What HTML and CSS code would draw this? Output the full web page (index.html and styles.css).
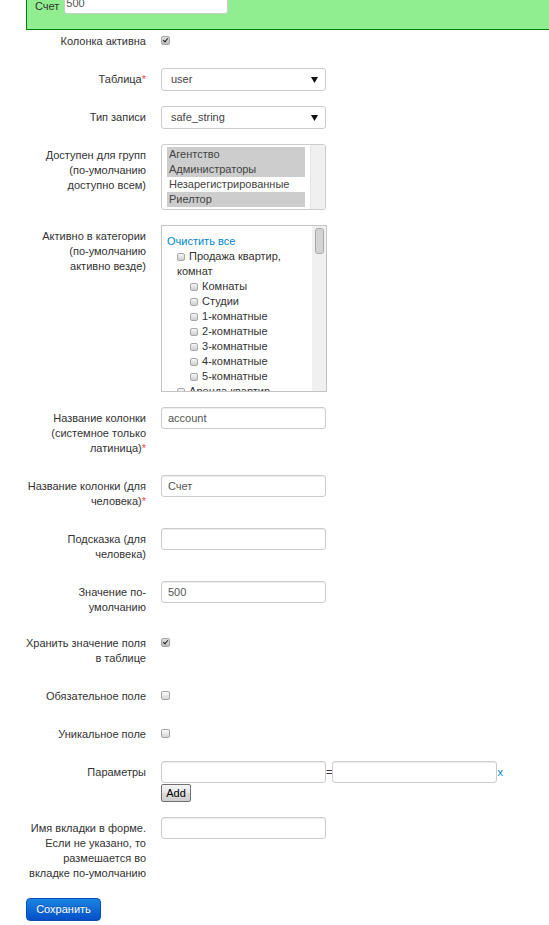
FILE: index.html
```html
<!DOCTYPE html>
<html lang="ru">
<head>
<meta charset="UTF-8">
<meta name="viewport" content="width=device-width, initial-scale=1.0">
<title>Колонка</title>
<link rel="stylesheet" href="styles.css">
</head>
<body>
<div class="preview">
    <label class="preview-label">Счет</label>
    <input type="text" class="preview-input" value="500">
</div>

<form class="form">
    <div class="row">
        <label class="label">Колонка активна</label>
        <div class="controls"><input type="checkbox" class="check" checked></div>
    </div>

    <div class="row">
        <label class="label">Таблица<span class="req">*</span></label>
        <div class="controls">
            <div class="select">
                <select><option>user</option></select>
                <svg width="7" height="6" viewBox="0 0 7 6"><path d="M0 0H7L3.5 6Z" fill="#111"/></svg>
            </div>
        </div>
    </div>

    <div class="row">
        <label class="label">Тип записи</label>
        <div class="controls">
            <div class="select">
                <select><option>safe_string</option></select>
                <svg width="7" height="6" viewBox="0 0 7 6"><path d="M0 0H7L3.5 6Z" fill="#111"/></svg>
            </div>
        </div>
    </div>

    <div class="row">
        <label class="label">Доступен для групп<br>(по-умолчанию<br>доступно всем)</label>
        <div class="controls">
            <div class="listbox">
                <div class="listbox-items">
                    <div class="option selected">Агентство</div>
                    <div class="option selected">Администраторы</div>
                    <div class="option">Незарегистрированные</div>
                    <div class="option selected">Риелтор</div>
                </div>
                <div class="listbox-bar"></div>
            </div>
        </div>
    </div>

    <div class="row">
        <label class="label">Активно в категории<br>(по-умолчанию<br>активно везде)</label>
        <div class="controls">
            <div class="tree-box">
                <div class="tree">
                    <a href="#" class="clear">Очистить все</a>
                    <ul>
                        <li><input type="checkbox" class="mini"> Продажа квартир, комнат
                            <ul>
                                <li><input type="checkbox" class="mini"> Комнаты</li>
                                <li><input type="checkbox" class="mini"> Студии</li>
                                <li><input type="checkbox" class="mini"> 1-комнатные</li>
                                <li><input type="checkbox" class="mini"> 2-комнатные</li>
                                <li><input type="checkbox" class="mini"> 3-комнатные</li>
                                <li><input type="checkbox" class="mini"> 4-комнатные</li>
                                <li><input type="checkbox" class="mini"> 5-комнатные</li>
                            </ul>
                        </li>
                        <li><input type="checkbox" class="mini"> Аренда квартир</li>
                    </ul>
                </div>
                <div class="tree-bar"><div class="tree-thumb"></div></div>
            </div>
        </div>
    </div>

    <div class="row">
        <label class="label">Название колонки<br>(системное только<br>латиница)<span class="req">*</span></label>
        <div class="controls"><input type="text" class="text" value="account"></div>
    </div>

    <div class="row">
        <label class="label">Название колонки (для<br>человека)<span class="req">*</span></label>
        <div class="controls"><input type="text" class="text" value="Счет"></div>
    </div>

    <div class="row">
        <label class="label">Подсказка (для<br>человека)</label>
        <div class="controls"><input type="text" class="text"></div>
    </div>

    <div class="row">
        <label class="label short">Значение по-<br>умолчанию</label>
        <div class="controls"><input type="text" class="text" value="500"></div>
    </div>

    <div class="row">
        <label class="label">Хранить значение поля<br>в таблице</label>
        <div class="controls"><input type="checkbox" class="check" checked></div>
    </div>

    <div class="row">
        <label class="label">Обязательное поле</label>
        <div class="controls"><input type="checkbox" class="check"></div>
    </div>

    <div class="row">
        <label class="label">Уникальное поле</label>
        <div class="controls"><input type="checkbox" class="check"></div>
    </div>

    <div class="row">
        <label class="label">Параметры</label>
        <div class="controls">
            <div class="param"><input type="text" class="text"><span class="eq">=</span><input type="text" class="text"><a href="#" class="remove">x</a></div>
            <button type="button" class="add">Add</button>
        </div>
    </div>

    <div class="row">
        <label class="label short">Имя вкладки в форме.<br>Если не указано, то<br>размешается во<br>вкладке по-умолчанию</label>
        <div class="controls"><input type="text" class="text"></div>
    </div>

    <div class="actions">
        <button type="submit" class="save">Сохранить</button>
    </div>
</form>
</body>
</html>
```

FILE: styles.css
```css
body {
    margin: 0;
    font-family: "Liberation Sans", Arial, sans-serif;
    font-size: 11px;
    line-height: 15px;
    color: #333;
    background-color: #fff;
}

/* зеленый блок предпросмотра */
.preview {
    display: flex;
    align-items: flex-end;
    gap: 5px;
    margin: -20px 0 0 26px;
    padding: 11px 0 15px 8px;
    background-color: #90ee90;
    border: 1px solid #008000;
    border-right: 0;
}
.preview-input {
    box-sizing: border-box;
    width: 164px;
    height: 22px;
    padding: 0 1px;
    border: 1px solid #ccc;
    border-radius: 3px;
    font: inherit;
    color: #555;
}

.form {
    margin: 0;
    padding: 0 0 0 6px;
}
.row {
    display: grid;
    grid-template-columns: 140px 1fr;
    column-gap: 15px;
    align-items: start;
    margin-bottom: 15px;
}
.label {
    text-align: right;
    white-space: nowrap;
    padding: 4px 0;
}
.label.short {
    padding-bottom: 2px;
}
.req {
    color: #e5534b;
}

.text {
    box-sizing: border-box;
    width: 165px;
    height: 22px;
    padding: 0 6px;
    border: 1px solid #ccc;
    border-radius: 3px;
    box-shadow: inset 0 1px 1px rgba(0, 0, 0, 0.075);
    font: inherit;
    color: #555;
}

.select {
    position: relative;
    width: 165px;
}
.select select {
    -webkit-appearance: none;
    appearance: none;
    box-sizing: border-box;
    display: block;
    width: 100%;
    height: 23px;
    padding: 0 20px 0 9px;
    border: 1px solid #ccc;
    border-radius: 3px;
    background-color: #fff;
    font: inherit;
    color: #444;
}
.select svg {
    position: absolute;
    right: 8px;
    top: 9px;
}

.listbox {
    display: flex;
    box-sizing: border-box;
    width: 165px;
    height: 66px;
    border: 1px solid #ccc;
    border-radius: 3px;
    overflow: hidden;
}
.listbox-items {
    flex: 1;
    padding: 2px 5px 0 5px;
}
.option {
    padding-left: 2px;
    color: #444;
}
.option.selected {
    background-color: #cdcdcd;
}
.listbox-bar {
    width: 14px;
    background-color: #f0f0f0;
    border-left: 1px solid #e4e4e4;
}

.tree-box {
    position: relative;
    box-sizing: border-box;
    width: 166px;
    height: 167px;
    border: 1px solid #c4c4c4;
    overflow: hidden;
}
.tree {
    padding: 8px 16px 0 5px;
}
.tree ul {
    list-style: none;
    margin: 0;
    padding-left: 10px;
}
.tree ul ul {
    padding-left: 13px;
}
.clear {
    display: block;
    color: #0088cc;
    text-decoration: none;
}
.mini {
    -webkit-appearance: none;
    appearance: none;
    box-sizing: border-box;
    width: 8px;
    height: 8px;
    margin: 0 1px 0 0;
    vertical-align: -1px;
    border: 1px solid #a8a8a8;
    border-radius: 2px;
    background: linear-gradient(#f6f6f6, #cfcfcf);
}
.tree-bar {
    position: absolute;
    top: 0;
    right: 0;
    bottom: 0;
    width: 14px;
    background-color: #f0f0f0;
}
.tree-thumb {
    box-sizing: border-box;
    width: 9px;
    height: 26px;
    margin: 2px 0 0 3px;
    background-color: #d4d4d4;
    border: 1px solid #a9a9a9;
    border-radius: 3px;
}

.check {
    -webkit-appearance: none;
    appearance: none;
    position: relative;
    display: block;
    box-sizing: border-box;
    width: 9px;
    height: 9px;
    margin: 6px 0 0;
    border: 1px solid #a3a3a3;
    border-radius: 2px;
    background: linear-gradient(#fbfbfb, #d6d6d6);
}
.check:checked {
    background: linear-gradient(#dedede, #c0c0c0);
}
.check:checked::after {
    content: "";
    position: absolute;
    left: 2px;
    top: 0;
    width: 2px;
    height: 4px;
    border: solid #222;
    border-width: 0 1.5px 1.5px 0;
    transform: rotate(40deg);
}

.param {
    display: flex;
    align-items: center;
}
.eq {
    color: #333;
}
.remove {
    color: #0088cc;
    text-decoration: none;
}
.add {
    display: block;
    width: 30px;
    height: 18px;
    margin-top: 1px;
    padding: 0;
    border: 1px solid #707070;
    border-radius: 2px;
    background: linear-gradient(#f4f4f4, #e6e6e6 50%, #dadada 50%, #d0d0d0);
    font: inherit;
    color: #000;
}

.actions {
    padding-left: 20px;
}
.save {
    width: 75px;
    height: 23px;
    padding: 0;
    border: 1px solid #0a4db8;
    border-radius: 4px;
    background: linear-gradient(#1a84e2, #0550c8);
    font: inherit;
    color: #fff;
    text-shadow: 0 -1px 0 rgba(0, 0, 0, 0.25);
}
```
